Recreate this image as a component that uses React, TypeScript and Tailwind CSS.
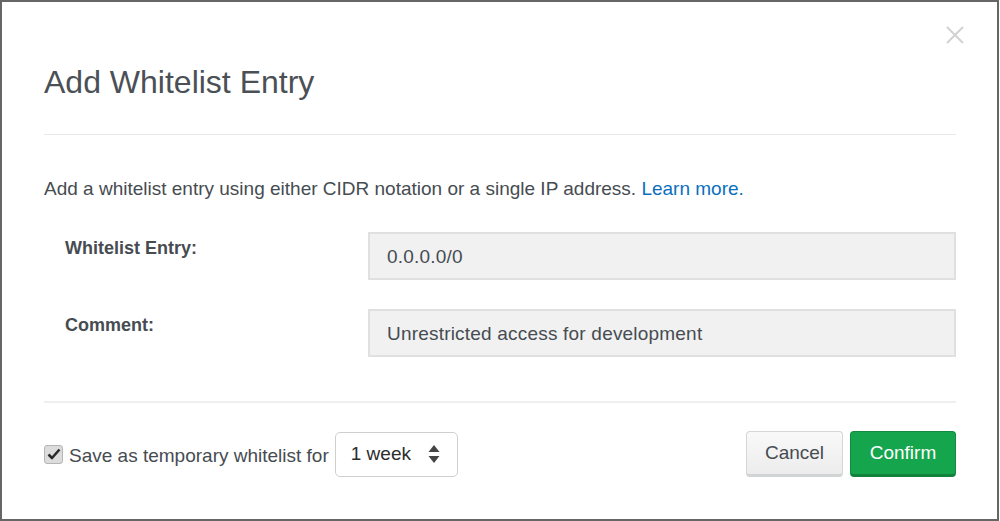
import React from "react";

export default function App() {
  return (
    <div
      className="w-[1000px] h-[521px] bg-white"
      style={{ fontFamily: '"Liberation Sans", Arial, sans-serif' }}
    >
      <div className="relative w-[999px] h-[521px] border-2 border-[#666] bg-white flex flex-col text-[#464c51]">
        <button className="absolute right-[32px] top-[23px]">
          <svg width="20" height="20" viewBox="0 0 20 20">
            <path d="M2 2 L18 18 M18 2 L2 18" stroke="#d2d2d2" strokeWidth="2" />
          </svg>
        </button>
        <div className="pl-[42px] pr-[41px] pt-[58px]">
          <h1 className="text-[32px] leading-[44px] text-[#4a5055] font-normal">
            Add Whitelist Entry
          </h1>
          <div className="mt-[30px] h-px bg-[#e8e8e8]" />
          <p className="mt-[42px] text-[19px] leading-[24px] text-[#464c51]">
            Add a whitelist entry using either CIDR notation or a single IP address.{" "}
            <span className="text-[#0a70bd]">Learn more.</span>
          </p>
          <div className="mt-[31px] flex items-start">
            <label className="w-[324px] pl-[21px] pt-[2px] text-[18px] leading-[28px] font-bold text-[#464c51]">
              Whitelist Entry:
            </label>
            <div className="flex-1 h-[48px] bg-[#f1f1f1] border-2 border-[#e0e0e0] flex items-center pl-[17px] pt-[3px] text-[19px] tracking-[0.2px] text-[#464c51]">
              0.0.0.0/0
            </div>
          </div>
          <div className="mt-[29px] flex items-start">
            <label className="w-[324px] pl-[21px] pt-[2px] text-[18px] leading-[28px] font-bold text-[#464c51]">
              Comment:
            </label>
            <div className="flex-1 h-[48px] bg-[#f1f1f1] border-2 border-[#e0e0e0] flex items-center pl-[17px] pt-[3px] text-[19px] tracking-[0.2px] text-[#464c51]">
              Unrestricted access for development
            </div>
          </div>
          <div className="mt-[44px] h-[2px] bg-[#efefef]" />
          <div className="mt-[28px] flex items-center">
            <div className="flex items-center">
              <div className="w-[19px] h-[19px] rounded-[3px] border border-[#b5b5b5] bg-[#dcdcdc] flex items-center justify-center">
                <svg width="14" height="12" viewBox="0 0 14 12">
                  <path d="M1.5 6.5 L5 10 L12.5 1.5" stroke="#2b2b2b" strokeWidth="2.6" fill="none" strokeLinejoin="round" />
                </svg>
              </div>
              <span className="ml-[6px] pt-[4px] text-[19px] text-[#464c51]">Save as temporary whitelist for</span>
              <div className="ml-[6px] w-[123px] h-[45px] rounded-[5px] border border-[#cfcfcf] bg-white flex items-center pl-[15px] pr-[17px] justify-between">
                <span className="text-[19px] text-[#2c2c2c]">1 week</span>
                <svg width="12" height="20" viewBox="0 0 12 20">
                  <path d="M6 1 L11.5 8 L0.5 8 Z" fill="#444" />
                  <path d="M6 19 L11.5 12 L0.5 12 Z" fill="#444" />
                </svg>
              </div>
            </div>
            <div className="ml-auto flex items-center gap-[7px]">
              <button className="w-[97px] h-[46px] rounded-[4px] border border-[#d6d6d6] border-b-[3px] border-b-[#d0d4d4] bg-gradient-to-b from-[#f9f9f9] to-[#ececec] text-[19px] text-[#464c51]">
                Cancel
              </button>
              <button className="w-[106px] h-[46px] rounded-[4px] border border-[#138a40] border-b-[3px] border-b-[#11823b] bg-[#15a54c] text-[19px] text-white">
                Confirm
              </button>
            </div>
          </div>
        </div>
      </div>
    </div>
  );
}
